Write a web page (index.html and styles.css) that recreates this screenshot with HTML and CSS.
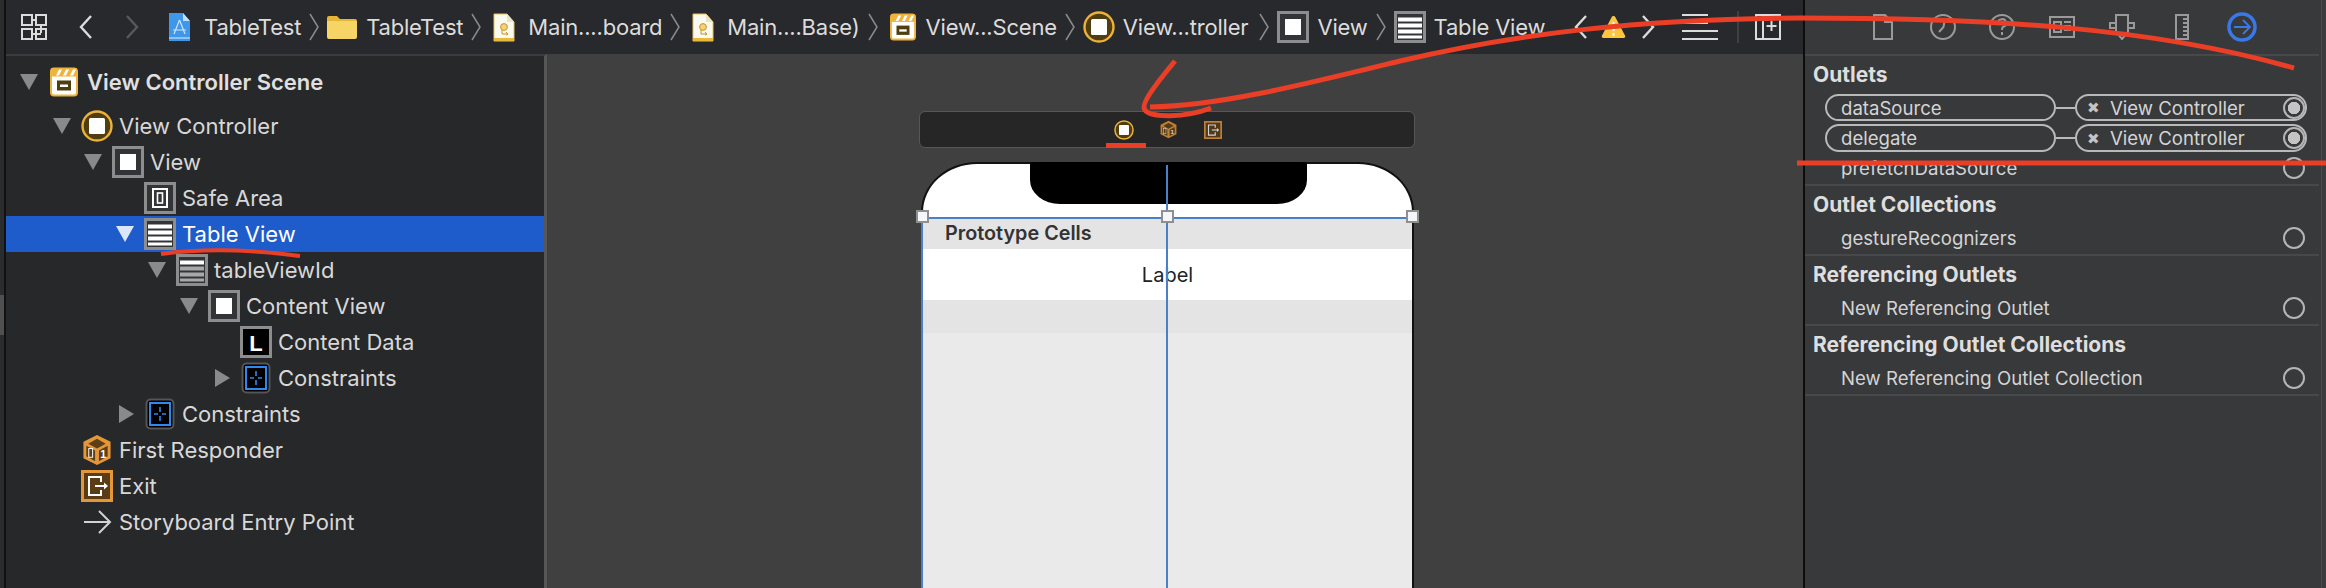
FILE: index.html
```html
<!DOCTYPE html>
<html lang="en">
<head>
    <meta charset="UTF-8">
    <title>TableTest - Main.storyboard</title>
    <link rel="stylesheet" href="styles.css">
</head>
<body>
    <!-- shared icons -->
    <svg class="icon-defs" xmlns="http://www.w3.org/2000/svg">
        <symbol id="i-scene" viewBox="0 0 28 29">
            <rect x="1" y="1" width="26" height="27" rx="3" fill="#fff" stroke="#f0b33c" stroke-width="2"/>
            <rect x="1" y="1" width="26" height="8" fill="#f0b33c"/>
            <path d="M6 8l3-6h3l-3 6zM13 8l3-6h3l-3 6zM20 8l3-6h3l-3 6z" fill="#fff"/>
            <rect x="7" y="13" width="14" height="10" fill="#4f3f10"/>
            <rect x="10" y="17" width="8" height="2.5" fill="#fff"/>
        </symbol>
        <symbol id="i-vc" viewBox="0 0 32 32">
            <circle cx="16" cy="16" r="14.5" fill="#4f3f10" stroke="#eeb23a" stroke-width="2.4"/>
            <rect x="8" y="8" width="16" height="16" rx="1.5" fill="#fff"/>
        </symbol>
        <symbol id="i-view" viewBox="0 0 32 32">
            <rect x="1.5" y="1.5" width="29" height="29" fill="#333438" stroke="#8d8d8d" stroke-width="3"/>
            <rect x="8" y="8" width="16" height="16" fill="#fff"/>
        </symbol>
        <symbol id="i-safe" viewBox="0 0 32 32">
            <rect x="1.5" y="1.5" width="29" height="29" fill="#333438" stroke="#8d8d8d" stroke-width="3"/>
            <rect x="9" y="7" width="14" height="18" fill="none" stroke="#fff" stroke-width="2"/>
            <rect x="13.5" y="11" width="5" height="10" fill="none" stroke="#fff" stroke-width="1.6"/>
        </symbol>
        <symbol id="i-table" viewBox="0 0 32 32">
            <rect x="1.5" y="1.5" width="29" height="29" fill="#333438" stroke="#8d8d8d" stroke-width="3"/>
            <path d="M4 6.5h24v4H4zM4 12.5h24v4H4zM4 18.5h24v4H4zM4 24.5h24v3H4z" fill="#fff"/>
        </symbol>
        <symbol id="i-table-cell" viewBox="0 0 32 32">
            <rect x="1.5" y="1.5" width="29" height="29" fill="#333438" stroke="#8d8d8d" stroke-width="3"/>
            <path d="M4 6.5h24v4H4z" fill="#fff"/>
            <path d="M4 12.5h24v4H4zM4 18.5h24v4H4zM4 24.5h24v3H4z" fill="#a8a8a8"/>
        </symbol>
        <symbol id="i-constraints" viewBox="0 0 30 32">
            <rect x="1.5" y="1.5" width="27" height="29" rx="4" fill="#000" stroke="#555" stroke-width="2"/>
            <rect x="5" y="5" width="20" height="22" fill="none" stroke="#2f87f0" stroke-width="2"/>
            <path d="M15 9v5M15 18v5M9 16h4M17 16h4" fill="none" stroke="#2f87f0" stroke-width="1.6"/>
        </symbol>
        <symbol id="i-cube" viewBox="0 0 30 33">
            <path d="M15 1l14 7v17l-14 7-14-7V8z" fill="#e4973a"/>
            <path d="M15 5l9 5-9 5-9-5z" fill="#5c3f14"/>
            <path d="M4 12l9 5v11l-9-5zM17 17l9-5v11l-9 5z" fill="#5c3f14"/>
            <rect x="6.5" y="15" width="4" height="9" fill="none" stroke="#fff" stroke-width="1"/>
            <text x="21.5" y="25" class="cube-digit">1</text>
        </symbol>
        <symbol id="i-exit" viewBox="0 0 32 32">
            <rect x="1.5" y="1.5" width="29" height="29" fill="#5b3d15" stroke="#e4973a" stroke-width="3"/>
            <path d="M20 12V7H8v18h12v-5" fill="none" stroke="#fff" stroke-width="2"/>
            <path d="M14 16h10" stroke="#fff" stroke-width="2"/>
            <path d="M23 12.5l4 3.5-4 3.5z" fill="#fff"/>
        </symbol>
        <symbol id="i-doc" viewBox="0 0 22 29">
            <path d="M1 1h13l7 8v19H1z" fill="#fbfaf0" stroke="#e8c25a"/>
            <path d="M14 1v8h7z" fill="#e9e4c8"/>
            <rect x="1" y="25" width="20" height="3" fill="#e8b93f"/>
            <circle cx="11" cy="14" r="3.4" fill="#f3d27a" stroke="#c99425"/>
            <path d="M9 17v4h6M13 19l2 2-2 1" fill="none" stroke="#c99425"/>
        </symbol>
        <symbol id="i-chev" viewBox="0 0 10 28">
            <path d="M1 1l8 13L1 27" fill="none" stroke="#8b8b8b" stroke-width="1.5"/>
        </symbol>
    </svg>

    <div class="edge edge-left"><div class="edge-thumb"></div></div>

    <div class="workspace">
        <header class="toolbar">
            <svg class="tb-grid" viewBox="0 0 26 26">
                <path d="M1 1h10v10H1zM15 1h10v10H15zM1 15h10v10H1zM15 15h10v10H15zM11 6h4M20 11v8M11 20h9" fill="none" stroke="#dcdcdc" stroke-width="2"/>
            </svg>
            <svg class="tb-back" viewBox="0 0 14 24"><path d="M12 1L2 12l10 11" fill="none" stroke="#dcdcdc" stroke-width="2.4"/></svg>
            <svg class="tb-forward" viewBox="0 0 14 24"><path d="M2 1l10 11L2 23" fill="none" stroke="#58595b" stroke-width="2.4"/></svg>

            <nav class="crumbs">
                <svg class="c-icon c-app" viewBox="0 0 23 29">
                    <path d="M1 0h14l7 8v20H1z" fill="#3f97ea"/>
                    <path d="M15 0v8h7z" fill="#bfe0fb"/>
                    <path d="M11.5 7L6 21M11.5 7L17 21M5 17h13" fill="none" stroke="#cfe6fb" stroke-width="1.2"/>
                    <path d="M1 25h21" stroke="#dff0ff" stroke-width="1"/>
                </svg>
                <span class="c-text">TableTest</span>
                <svg class="c-chev"><use href="#i-chev"/></svg>
                <svg class="c-icon c-folder" viewBox="0 0 30 24">
                    <path d="M0 3a2 2 0 0 1 2-2h8l3 3h15a2 2 0 0 1 2 2v3H0z" fill="#e4b537"/>
                    <path d="M0 6h30v16a2 2 0 0 1-2 2H2a2 2 0 0 1-2-2z" fill="#f6d465"/>
                </svg>
                <span class="c-text">TableTest</span>
                <svg class="c-chev"><use href="#i-chev"/></svg>
                <svg class="c-icon c-doc"><use href="#i-doc"/></svg>
                <span class="c-text">Main....board</span>
                <svg class="c-chev"><use href="#i-chev"/></svg>
                <svg class="c-icon c-doc"><use href="#i-doc"/></svg>
                <span class="c-text">Main....Base)</span>
                <svg class="c-chev"><use href="#i-chev"/></svg>
                <svg class="c-icon c-scene"><use href="#i-scene"/></svg>
                <span class="c-text">View...Scene</span>
                <svg class="c-chev"><use href="#i-chev"/></svg>
                <svg class="c-icon c-square"><use href="#i-vc"/></svg>
                <span class="c-text">View...troller</span>
                <svg class="c-chev c-chev-wide"><use href="#i-chev"/></svg>
                <svg class="c-icon c-square"><use href="#i-view"/></svg>
                <span class="c-text">View</span>
                <svg class="c-chev"><use href="#i-chev"/></svg>
                <svg class="c-icon c-square"><use href="#i-table"/></svg>
                <span class="c-text">Table View</span>
            </nav>

            <svg class="tb-issue-prev" viewBox="0 0 14 24"><path d="M12 1L2 12l10 11" fill="none" stroke="#dcdcdc" stroke-width="2.4"/></svg>
            <svg class="tb-warning" viewBox="0 0 25 24"><path d="M12.5 1c1 0 1.5.5 2 1.5l9.5 18c.7 1.5 0 2.5-1.5 2.5h-20C1 23 .3 22 1 20.5l9.5-18c.5-1 1-1.5 2-1.5z" fill="#fcc63f"/><path d="M12.5 7v9M12.5 18v3" stroke="#fff" stroke-width="2"/></svg>
            <svg class="tb-issue-next" viewBox="0 0 14 24"><path d="M2 1l10 11L2 23" fill="none" stroke="#dcdcdc" stroke-width="2.4"/></svg>
            <svg class="tb-lines" viewBox="0 0 36 26"><path d="M0 1h26M0 9h26M0 17h36M0 25h36" fill="none" stroke="#dcdcdc" stroke-width="2"/></svg>
            <div class="tb-sep"></div>
            <svg class="tb-add" viewBox="0 0 26 26"><path d="M1 1h24v24H1zM8 1v24M16.5 7v10M11.5 12h10" fill="none" stroke="#dcdcdc" stroke-width="2"/></svg>
        </header>

        <div class="editor">
            <aside class="outline">
                <div class="row row-scene">
                    <i class="tri tri-down"></i>
                    <svg class="ic"><use href="#i-scene"/></svg>
                    <span>View Controller Scene</span>
                </div>
                <div class="row l1"><i class="tri tri-down"></i><svg class="ic"><use href="#i-vc"/></svg><span>View Controller</span></div>
                <div class="row l2"><i class="tri tri-down"></i><svg class="ic"><use href="#i-view"/></svg><span>View</span></div>
                <div class="row l3"><i class="tri tri-none"></i><svg class="ic"><use href="#i-safe"/></svg><span>Safe Area</span></div>
                <div class="row l3 selected"><i class="tri tri-down"></i><svg class="ic"><use href="#i-table"/></svg><span>Table View</span></div>
                <div class="row l4"><i class="tri tri-down"></i><svg class="ic"><use href="#i-table-cell"/></svg><span>tableViewId</span></div>
                <div class="row l5"><i class="tri tri-down"></i><svg class="ic"><use href="#i-view"/></svg><span>Content View</span></div>
                <div class="row l6">
                    <i class="tri tri-none"></i>
                    <svg class="ic" viewBox="0 0 32 32">
                        <rect x="1.5" y="1.5" width="29" height="29" fill="#000" stroke="#8d8d8d" stroke-width="3"/>
                        <text x="16" y="25" class="label-glyph">L</text>
                    </svg>
                    <span>Content Data</span>
                </div>
                <div class="row l6"><i class="tri tri-right"></i><svg class="ic"><use href="#i-constraints"/></svg><span>Constraints</span></div>
                <div class="row l3"><i class="tri tri-right"></i><svg class="ic"><use href="#i-constraints"/></svg><span>Constraints</span></div>
                <div class="row l1"><i class="tri tri-none"></i><svg class="ic"><use href="#i-cube"/></svg><span>First Responder</span></div>
                <div class="row l1"><i class="tri tri-none"></i><svg class="ic"><use href="#i-exit"/></svg><span>Exit</span></div>
                <div class="row l1">
                    <i class="tri tri-none"></i>
                    <svg class="ic" viewBox="0 0 32 32"><path d="M3 16h26M18 5l11 11-11 11" fill="none" stroke="#d2d2d2" stroke-width="2"/></svg>
                    <span>Storyboard Entry Point</span>
                </div>
            </aside>

            <main class="canvas">
                <div class="dock">
                    <svg class="dock-vc"><use href="#i-vc"/></svg>
                    <svg class="dock-cube"><use href="#i-cube"/></svg>
                    <svg class="dock-exit"><use href="#i-exit"/></svg>
                </div>
                <div class="phone">
                    <div class="notch"></div>
                    <div class="status-space"></div>
                    <div class="proto-header">Prototype Cells</div>
                    <div class="proto-cell">Label</div>
                    <div class="proto-footer"></div>
                    <div class="proto-empty"></div>
                    <div class="guide-v"></div>
                    <div class="sel-top"></div>
                    <div class="sel-left"></div>
                    <div class="handle handle-l"></div>
                    <div class="handle handle-c"></div>
                    <div class="handle handle-r"></div>
                </div>
            </main>
        </div>
    </div>

    <section class="inspector">
        <div class="insp-tabs">
            <svg class="tab tab-file" viewBox="0 0 20 26"><path d="M1 1h11l7 7v17H1zM12 1v7h7" fill="none" stroke="#9a9a9a" stroke-width="2"/></svg>
            <svg class="tab tab-clock" viewBox="0 0 26 26"><circle cx="13" cy="13" r="12" fill="none" stroke="#9a9a9a" stroke-width="2"/><path d="M15 4l-1.5 9L9 18" fill="none" stroke="#9a9a9a" stroke-width="2"/></svg>
            <svg class="tab tab-help" viewBox="0 0 26 26"><circle cx="13" cy="13" r="12" fill="none" stroke="#9a9a9a" stroke-width="2"/><path d="M9 9a4 4 0 1 1 5 4c-1 .5-1 1-1 3M13 18v3" fill="none" stroke="#9a9a9a" stroke-width="2"/></svg>
            <svg class="tab tab-ident" viewBox="0 0 26 22"><path d="M1 1h24v20H1zM5 6h7v10H5zM15 6h7M15 10h7M15 14h7" fill="none" stroke="#9a9a9a" stroke-width="2"/></svg>
            <svg class="tab tab-attr" viewBox="0 0 26 26"><path d="M7 1h12v17l-6 7-6-7zM7 9H1v5h6M19 9h6v5h-6" fill="none" stroke="#9a9a9a" stroke-width="2"/></svg>
            <svg class="tab tab-ruler" viewBox="0 0 14 26"><path d="M1 1h12v24H1zM8 5h5M8 9h5M8 13h5M8 17h5M8 21h5" fill="none" stroke="#9a9a9a" stroke-width="2"/></svg>
            <svg class="tab tab-conn" viewBox="0 0 30 30"><circle cx="15" cy="15" r="13" fill="none" stroke="#3b78e7" stroke-width="3.5"/><path d="M7 15h15M16 8l7 7-7 7" fill="none" stroke="#3b78e7" stroke-width="1.8"/></svg>
        </div>

        <div class="insp-section">
            <h3>Outlets</h3>
            <div class="link-row">
                <div class="pill pill-name">dataSource</div>
                <div class="link-wire"></div>
                <div class="pill pill-target"><span class="pill-x">&#10006;</span>View Controller<i class="dot dot-on"></i></div>
            </div>
            <div class="link-row">
                <div class="pill pill-name">delegate</div>
                <div class="link-wire"></div>
                <div class="pill pill-target"><span class="pill-x">&#10006;</span>View Controller<i class="dot dot-on"></i></div>
            </div>
            <div class="out-row"><span>prefetchDataSource</span><i class="dot"></i></div>
        </div>
        <div class="insp-section">
            <h3>Outlet Collections</h3>
            <div class="out-row"><span>gestureRecognizers</span><i class="dot"></i></div>
        </div>
        <div class="insp-section">
            <h3>Referencing Outlets</h3>
            <div class="out-row"><span>New Referencing Outlet</span><i class="dot"></i></div>
        </div>
        <div class="insp-section">
            <h3>Referencing Outlet Collections</h3>
            <div class="out-row"><span>New Referencing Outlet Collection</span><i class="dot"></i></div>
        </div>
    </section>

    <div class="edge edge-right"></div>

    <!-- red hand drawn marks on top of the screenshot -->
    <svg class="scribbles" viewBox="0 0 2326 588">
        <g fill="none" stroke="#ea3f26" stroke-linecap="butt">
            <path stroke-width="5" d="M2294 68C2150 27 1990 18 1800 18C1640 19 1520 33 1400 61C1310 83 1220 106 1150 107"/>
            <path stroke-width="5" d="M1175 61C1155 85 1140 105 1145 110C1150 118 1185 118 1211 108"/>
            <path stroke-width="5" d="M1797 163H2326"/>
            <path stroke-width="4" d="M161 254C205 248 255 250 300 256"/>
            <path stroke-width="5" d="M1106 145.5H1146"/>
        </g>
    </svg>
</body>
</html>
```
FILE: styles.css
```css
* {
    box-sizing: border-box;
}

html, body {
    height: 100%;
}

body {
    margin: 0;
    display: flex;
    overflow: hidden;
    font-family: Inter, "Noto Sans", sans-serif;
    font-size: 22px;
    color: #dcdcdc;
    background: #28292c;
}

svg {
    display: block;
    flex: none;
}

.icon-defs {
    display: none;
}

.edge-left {
    width: 6px;
    background: #2b2c2e;
    border-right: 2px solid #111;
}

.edge-thumb {
    margin-top: 295px;
    height: 40px;
    background: #505050;
}

.edge-right {
    width: 5px;
    background: #3a3b3d;
    border-left: 1px solid #4b4c4e;
}

.workspace {
    width: 1797px;
    display: flex;
    flex-direction: column;
}

/* top toolbar */
.toolbar {
    height: 54px;
    display: flex;
    align-items: center;
    background: #28292c;
}

.tb-grid { width: 26px; height: 26px; margin-left: 15px; }
.tb-back { width: 14px; height: 24px; margin-left: 32px; }
.tb-forward { width: 14px; height: 24px; margin-left: 32px; }

.crumbs {
    width: 1406px;
    margin-left: 29px;
    display: flex;
    align-items: center;
    overflow: hidden;
    white-space: nowrap;
    letter-spacing: -0.2px;
}

.c-icon { margin-right: 13px; }
.c-app { width: 23px; height: 29px; }
.c-folder { width: 30px; height: 24px; margin-right: 9px; }
.c-doc { width: 22px; height: 29px; margin-left: 4px; }
.c-scene { width: 26px; height: 28px; margin-left: 4px; margin-right: 10px; }
.c-square { width: 32px; height: 32px; margin-right: 8px; }

.c-chev { width: 10px; height: 28px; margin: 0 8px; }
.c-chev-wide { margin-left: 11px; }

.tb-issue-prev { width: 14px; height: 24px; }
.tb-warning { width: 25px; height: 24px; margin-left: 13px; }
.tb-issue-next { width: 14px; height: 24px; margin-left: 15px; }
.tb-lines { width: 36px; height: 26px; margin-left: 27px; }
.tb-sep { width: 2px; height: 32px; margin-left: 19px; background: #3e3f41; }
.tb-add { width: 26px; height: 26px; margin-left: 16px; }

.editor {
    flex: 1;
    display: flex;
    min-height: 0;
}

/* left outline */
.outline {
    width: 541px;
    padding-top: 8px;
    background: #27282a;
    border-top: 2px solid #3a3b3d;
    border-right: 3px solid #555658;
}

.row {
    height: 36px;
    display: flex;
    align-items: center;
    white-space: nowrap;
    color: #d8d8d8;
}

.row-scene {
    margin-bottom: 8px;
    padding-left: 14px;
    font-weight: 600;
    color: #e0e0e0;
}

.row-scene .ic {
    width: 28px;
    margin-right: 9px;
}

.l1 { padding-left: 47px; }
.l2 { padding-left: 78px; }
.l3 { padding-left: 110px; }
.l4 { padding-left: 142px; }
.l5 { padding-left: 174px; }
.l6 { padding-left: 206px; }

.tri {
    flex: none;
}

.tri-none {
    width: 28px;
    height: 1px;
}

.tri-down {
    width: 18px;
    margin-right: 10px;
    border-top: 16px solid #8a8a8a;
    border-left: 9px solid transparent;
    border-right: 9px solid transparent;
}

.row-scene .tri-down {
    margin-right: 12px;
}

.tri-right {
    width: 15px;
    margin-left: 3px;
    margin-right: 10px;
    border-left: 15px solid #8a8a8a;
    border-top: 9px solid transparent;
    border-bottom: 9px solid transparent;
}

.ic {
    width: 32px;
    height: 32px;
    margin-right: 6px;
}

.selected {
    background: #1f5ccb;
    color: #fff;
}

.selected .tri-down { border-top-color: #dce6fb; }

.label-glyph {
    font: 700 22px "Liberation Sans", sans-serif;
    fill: #fff;
    text-anchor: middle;
}

.cube-digit {
    font: 700 11px "Liberation Sans", sans-serif;
    fill: #fff;
    text-anchor: middle;
}

/* storyboard canvas */
.canvas {
    flex: 1;
    padding: 57px 0 0 372px;
    background: #404040;
    overflow: hidden;
    display: flex;
    flex-direction: column;
}

.dock {
    flex: none;
    width: 496px;
    height: 37px;
    display: flex;
    align-items: center;
    padding-left: 194px;
    background: #262626;
    border: 1px solid #575757;
    border-radius: 6px;
}

.dock-vc { width: 20px; height: 20px; }
.dock-cube { width: 17px; height: 19px; margin-left: 26px; opacity: .8; }
.dock-exit { width: 18px; height: 18px; margin-left: 27px; opacity: .8; }

.phone {
    position: relative;
    flex: 1;
    width: 493px;
    margin: 14px 0 0 2px;
    display: flex;
    flex-direction: column;
    background: #fff;
    border: 2px solid #111;
    border-bottom: none;
    border-radius: 56px 56px 0 0 / 50px 50px 0 0;
    color: #222;
}

.notch {
    position: absolute;
    left: 107px;
    top: -2px;
    width: 277px;
    height: 42px;
    background: #000;
    border-radius: 4px 4px 30px 30px / 2px 2px 24px 24px;
}

.status-space { height: 55px; }

.proto-header {
    height: 30px;
    padding-left: 22px;
    line-height: 28px;
    font-size: 19.8px;
    font-weight: 600;
    color: #333;
    background: #e4e4e4;
}

.proto-cell {
    height: 51px;
    line-height: 53px;
    text-align: center;
    font-size: 20px;
}

.proto-footer { height: 33px; background: #e4e4e4; }
.proto-empty { flex: 1; background: #eaeaea; }

/* table view selection, drawn over the phone */
.guide-v {
    position: absolute;
    left: 243px;
    top: 1px;
    bottom: 0;
    width: 2px;
    background: #4a80c8;
}

.sel-top {
    position: absolute;
    left: -2px;
    right: -2px;
    top: 53px;
    height: 2px;
    background: #4a80c8;
}

.sel-left {
    position: absolute;
    left: -2px;
    top: 53px;
    bottom: 0;
    width: 2px;
    background: #4a80c8;
}

.handle {
    position: absolute;
    top: 46px;
    width: 13px;
    height: 13px;
    background: #f4f6fa;
    border: 2px solid #8f8f8f;
}

.handle-l { left: -7px; }
.handle-c { left: 238px; }
.handle-r { right: -7px; }

/* right inspector */
.inspector {
    width: 518px;
    background: #38393b;
    border-left: 2px solid #0d0d0d;
    border-right: 2px solid #38393b;
}

.insp-tabs {
    height: 56px;
    display: flex;
    align-items: center;
    border-bottom: 2px solid #47484a;
}

.tab { height: 26px; }
.tab-file { width: 20px; margin-left: 68px; }
.tab-clock { width: 26px; margin-left: 37px; }
.tab-help { width: 26px; margin-left: 33px; }
.tab-ident { width: 26px; height: 22px; margin-left: 34px; }
.tab-attr { width: 26px; margin-left: 34px; }
.tab-ruler { width: 14px; margin-left: 40px; }
.tab-conn { width: 30px; height: 30px; margin-left: 38px; }

.insp-section {
    padding: 0 14px 0 8px;
    border-bottom: 2px solid #47484a;
    font-size: 18.6px;
}

.insp-section h3 {
    margin: 0;
    height: 38px;
    line-height: 38px;
    font-size: 21px;
    font-weight: 700;
    color: #dedede;
}

.out-row {
    height: 30px;
    padding: 0 0 2px 28px;
    display: flex;
    align-items: center;
    justify-content: space-between;
    color: #d4d4d4;
}

.dot {
    flex: none;
    width: 22px;
    height: 22px;
    border: 2px solid #b5b5b5;
    border-radius: 50%;
}

.link-row {
    height: 27px;
    margin: 0 -2px 3px 12px;
    display: flex;
    align-items: center;
    color: #d4d4d4;
}

.link-row + .link-row {
    height: 28px;
    margin-bottom: 2px;
}

.pill {
    height: 100%;
    display: flex;
    align-items: center;
    border: 2px solid #b9b9b9;
    border-radius: 14px;
}

.pill-name { width: 231px; padding-left: 14px; }
.link-wire { width: 19px; height: 2px; background: #b9b9b9; }

.pill-target {
    width: 232px;
    padding: 0 0 0 10px;
}

.pill-x {
    width: 23px;
    font-size: 15px;
    color: #c4c4c4;
}

.dot-on {
    margin-left: auto;
    background: radial-gradient(circle, #c4c4c4 0, #c4c4c4 6px, transparent 6.5px);
}

/* hand drawn marks */
.scribbles {
    position: absolute;
    left: 0;
    top: 0;
    width: 2326px;
    height: 588px;
    pointer-events: none;
}
```
